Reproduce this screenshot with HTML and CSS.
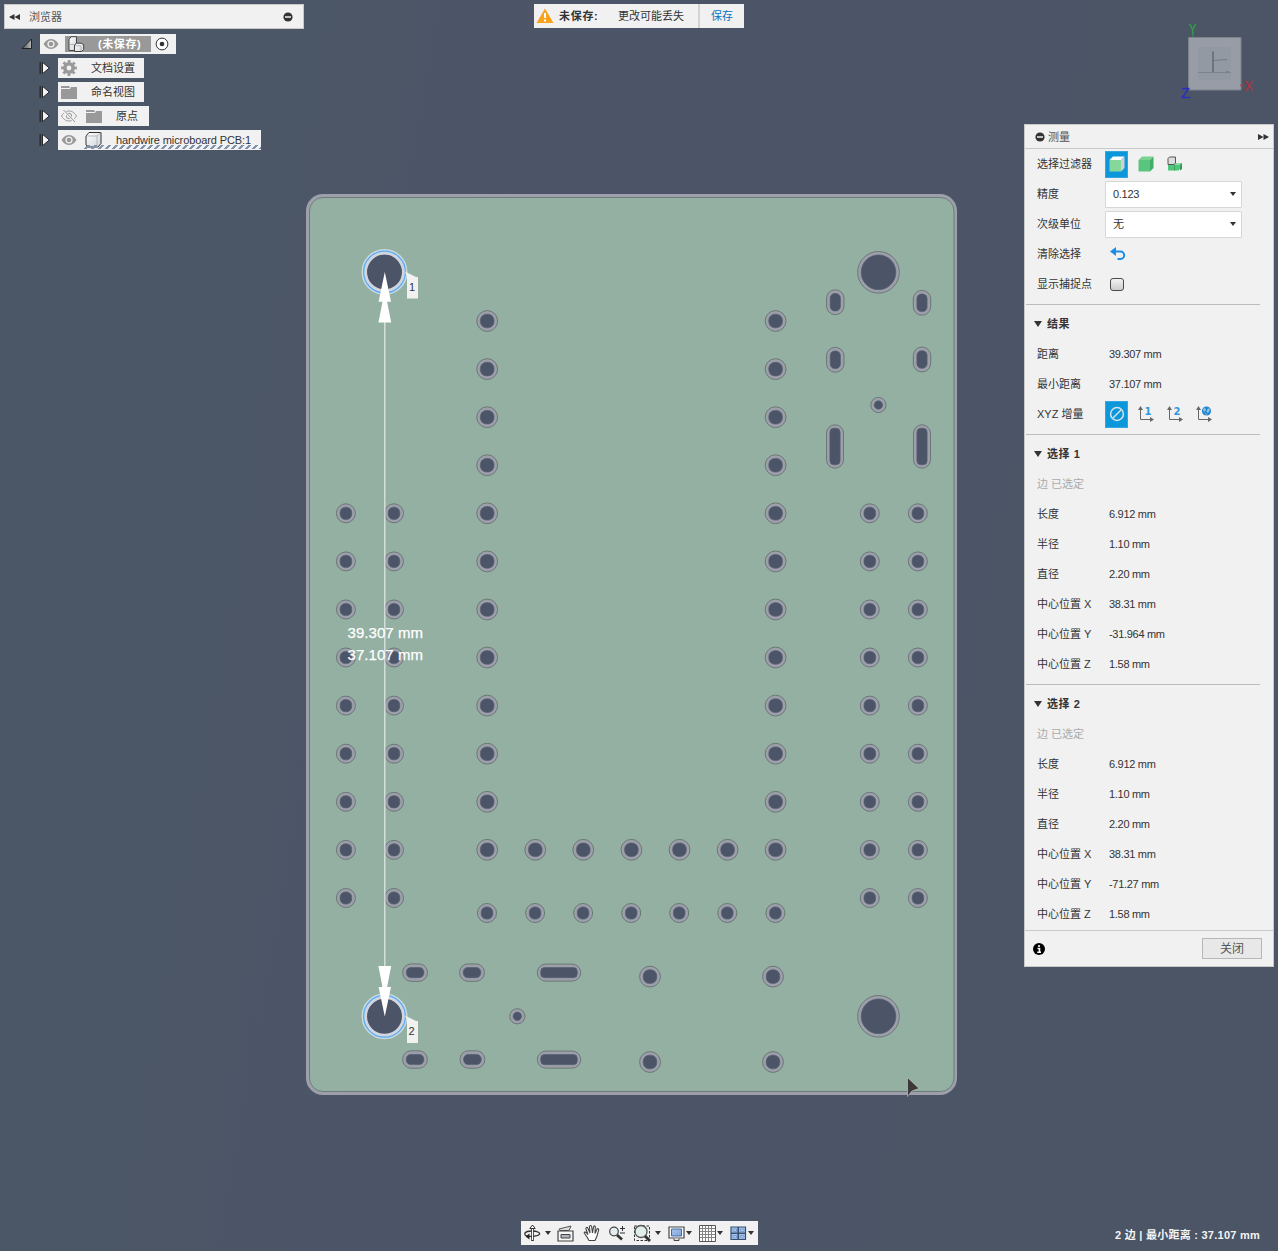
FILE: index.html
```html
<!DOCTYPE html>
<html lang="zh-CN">
<head>
<meta charset="utf-8">
<title>测量</title>
<link rel="stylesheet" href="styles.css">
</head>
<body>
<svg width="0" height="0" class="defs">
  <defs>
    <linearGradient id="glass" x1="0" y1="0" x2="1" y2="1"><stop offset="0" stop-color="#fff"/><stop offset="1" stop-color="#cfd3da"/></linearGradient>
    <linearGradient id="screen" x1="0" y1="0" x2="1" y2="1"><stop offset="0" stop-color="#a9c6ec"/><stop offset="1" stop-color="#7fa3d8"/></linearGradient>
    <linearGradient id="fold" x1="0" y1="0" x2="1" y2="0"><stop offset="0" stop-color="#555"/><stop offset="1" stop-color="#bbb"/></linearGradient>
    <symbol id="eye" viewBox="0 0 16 12"><path d="M.5 6C3 2 5.500 1 8 1s5 1 7.500 5C13 10 10.500 11 8 11S3 10 .5 6z" fill="#999"/><circle cx="8" cy="6" r="3.600" fill="#f0f0f0"/><circle cx="8" cy="6" r="2.300" fill="#999"/></symbol>
    <symbol id="eyeoff" viewBox="0 0 16 12"><path d="M.5 6C3 2 5.500 1 8 1s5 1 7.500 5C13 10 10.500 11 8 11S3 10 .5 6z" fill="none" stroke="#999"/><circle cx="8" cy="6" r="2.700" fill="none" stroke="#999"/><path d="M2 0l12 12" stroke="#f0f0f0" stroke-width="2.500"/><path d="M2.500 0l11.500 12" stroke="#999"/></symbol>
    <symbol id="folder" viewBox="0 0 16 13"><path d="M0 0h8l1 2H0zM0 3h9l1-2h6v12H0z" fill="#999"/></symbol>
    <symbol id="arrow" viewBox="0 0 12 14"><path d="M1.200 1v12" stroke="#242424" stroke-width="1.200"/><path d="M3.500 1.300v11.400L10.300 7z" fill="#f4f4f4" stroke="#242424" stroke-width="1"/></symbol>
    <symbol id="axes" viewBox="0 0 18 18"><path d="M3.500 2v12.500H15" fill="none" stroke="#666"/><path d="M1 5L3.500 1 6 5zM13 12l4 2.500-4 2.500z" fill="#666"/></symbol>
    <symbol id="caret" viewBox="0 0 6 4"><path d="M0 0h6L3 4z" fill="#333"/></symbol>
    <g id="pad"><circle r="10.400" class="ring"/><rect x="-6.800" y="-6.800" width="13.600" height="13.600" rx="6" class="hole"/></g>
    <g id="pin"><circle r="9.500" class="ring"/><rect x="-5.800" y="-6.100" width="11.600" height="12.200" rx="5.200" class="hole"/></g>
    <g id="via"><circle r="7.600" class="ring"/><circle r="4.200" class="hole"/></g>
    <g id="mount"><circle r="20.800" class="ring"/><circle r="17.400" class="hole"/></g>
    <g id="slot"><rect x="-8.700" y="-12.400" width="17.400" height="24.800" rx="8.500" class="ring"/><rect x="-5.100" y="-8.800" width="10.200" height="17.600" rx="4.600" class="hole"/></g>
    <g id="longslot"><rect x="-8.500" y="-21.700" width="17" height="43.400" rx="8.500" class="ring"/><rect x="-5.100" y="-18.300" width="10.200" height="36.600" rx="4" class="hole"/></g>
    <g id="pads4"><use href="#pad"/><use href="#pad" y="48.100"/><use href="#pad" y="96.200"/><use href="#pad" y="144.200"/></g>
    <g id="pads12"><use href="#pads4"/><use href="#pads4" y="192.300"/><use href="#pads4" y="384.600"/></g>
    <g id="pins3"><use href="#pin"/><use href="#pin" y="48.100"/><use href="#pin" y="96.200"/></g>
    <g id="pins9"><use href="#pins3"/><use href="#pins3" y="144.200"/><use href="#pins3" y="288.500"/></g>
    <g id="pick"><circle r="20.700" fill="none" stroke="#cbdadd" stroke-width="4.600"/><circle r="17.800" class="hole"/><circle r="18.500" fill="none" stroke="#d4d4df" stroke-width="2"/><circle r="20.900" fill="none" stroke="#57a9fa" stroke-width="1.200"/></g>
  </defs>
</svg>

<main class="app">
  <svg class="scene" width="1278" height="1251" viewBox="0 0 1278 1251">
    <rect x="307.500" y="195.500" width="648" height="898" rx="15.500" fill="#93b0a2" stroke="#9da0aa" stroke-width="3"/>
    <rect x="309.500" y="197.500" width="644.500" height="894" rx="13.500" fill="none" stroke="#717a7b"/>
    <use href="#mount" x="878.500" y="272.300"/><use href="#mount" x="878.500" y="1016.300"/>
    <use href="#pads12" x="487.200" y="321"/><use href="#pads12" x="775.600" y="321"/>
    <use href="#pad" x="535.300" y="849.800"/><use href="#pad" x="583.300" y="849.800"/><use href="#pad" x="631.400" y="849.800"/><use href="#pad" x="679.500" y="849.800"/><use href="#pad" x="727.600" y="849.800"/>
    <use href="#pin" x="487" y="913"/><use href="#pin" x="535.100" y="913"/><use href="#pin" x="583.100" y="913"/><use href="#pin" x="631.200" y="913"/><use href="#pin" x="679.200" y="913"/><use href="#pin" x="727.300" y="913"/><use href="#pin" x="775.400" y="913"/>
    <use href="#pins9" x="345.900" y="513.300"/><use href="#pins9" x="394" y="513.300"/><use href="#pins9" x="869.800" y="513.300"/><use href="#pins9" x="917.900" y="513.300"/>
    <use href="#pad" x="650" y="976.600"/><use href="#pad" x="773" y="976.600"/><use href="#pad" x="650" y="1062"/><use href="#pad" x="773" y="1062"/>
    <use href="#slot" x="835.300" y="302.200"/><use href="#slot" x="922" y="302.800"/><use href="#slot" x="835.300" y="359.800"/><use href="#slot" x="922" y="359.500"/>
    <use href="#longslot" x="835" y="446.500"/><use href="#longslot" x="922" y="446.500"/>
    <use href="#via" x="878.400" y="405"/><use href="#via" x="517.300" y="1016.300"/>
    <use href="#slot" transform="translate(415.100 972.600) rotate(90)"/><use href="#slot" transform="translate(472 972.600) rotate(90)"/><use href="#slot" transform="translate(415 1059.500) rotate(90)"/><use href="#slot" transform="translate(472.400 1059.500) rotate(90)"/>
    <use href="#longslot" transform="translate(559 972.600) rotate(90)"/><use href="#longslot" transform="translate(559 1059.600) rotate(90)"/>
    <use href="#pick" x="384.500" y="272"/><use href="#pick" x="384.500" y="1016.300"/>
    <path d="M384.800 322v645" stroke="#dde7e2" stroke-width="1.300"/>
    <path d="M384.800 272l6.200 29.800h-12.400zM384.800 290l6.400 32.500h-12.800zM384.800 1016.500l6.200-29.500h-12.400zM384.800 999l6.400-33h-12.800z" fill="#fff"/>
    <g class="tag"><path d="M405 271.500l11 5.500h2v21.500h-11V276zM405 1015.500l11 5.500h2v22h-11v-23z" fill="#f1f1f1"/><text x="409" y="291">1</text><text x="408.500" y="1035">2</text></g>
    <g class="dimension"><text x="347.500" y="638" textLength="75.500">39.307 mm</text><text x="347.500" y="660" textLength="75.500">37.107 mm</text></g>
    <g class="cube"><path d="M1188.500 37.500h52.500v52.500h-52.500z" fill="#989ca7" stroke="#7d8488"/><path d="M1198 47h33v33h-33z" fill="#9299a3"/><path d="M1198 72.500h33" stroke="#7c858f"/><path d="M1213 51.500v20.500" stroke="#6b747f" stroke-width="2"/><path d="M1214 60.500l13-1M1226 71.800h3" stroke="#707983"/><path d="M1193 32v5" stroke="#29a043"/><path d="M1240 85l4 1" stroke="#c22d37"/><text x="1189" y="34" fill="#2ba044" stroke="#2ba044" textLength="7.500" lengthAdjust="spacingAndGlyphs">Y</text><text x="1244.500" y="91" fill="#ae343f" stroke="#ae343f" textLength="8.500" lengthAdjust="spacingAndGlyphs">X</text><text x="1181" y="97.500" fill="#2930bd" stroke="#2930bd" textLength="9" lengthAdjust="spacingAndGlyphs">Z</text></g>
    <path d="M907.500 1077.500v19l4.500-5.500 7-2.500z" fill="#3d383a" stroke="#c7cbc8" stroke-width=".6"/>
  </svg>

  <section class="browser">
    <header class="browser-head"><svg width="11" height="8" viewBox="0 0 11 8"><path d="M5.500 1v6L0 4zM11 1v6L5.500 4z" fill="#333"/></svg><span>浏览器</span><svg class="collapse" width="10" height="10"><circle cx="5" cy="5" r="4.600" fill="#333"/><path d="M2 5h6" stroke="#fff" stroke-width="1.400"/></svg></header>
    <div class="node root"><svg width="12" height="12"><path d="M1 10.500L10.500 1v9.500z" fill="url(#fold)" stroke="#222"/></svg><div class="chip"><svg width="16" height="12"><use href="#eye"/></svg><div class="active-name"><svg width="17" height="16" viewBox="0 0 17 16"><path d="M1 3.500L3 .7h5.500v6.500L6.500 9v5.500H1z" fill="url(#glass)" stroke="#444"/><path d="M6.500 9l2-1.800h4.700l2.500 1.500v4.800l-2.200 2H6.500z" fill="url(#glass)" stroke="#444"/><path d="M1.500 8.500h5M7 9.800h6M13 10v5" fill="none" stroke="#a5a9b0" stroke-width=".8"/></svg><b>(未保存)</b></div><svg width="14" height="14"><circle cx="7" cy="7" r="5.900" fill="#fff" stroke="#333"/><circle cx="7" cy="7" r="2.300" fill="#333"/></svg></div></div>
    <div class="node"><svg width="12" height="14"><use href="#arrow"/></svg><div class="chip"><svg width="16" height="16"><circle cx="8" cy="8" r="4.200" fill="none" stroke="#999" stroke-width="3.600"/><circle cx="8" cy="8" r="6.600" fill="none" stroke="#999" stroke-width="2.600" stroke-dasharray="2.700 2.480" transform="rotate(-12 8 8)"/></svg><span>文档设置</span></div></div>
    <div class="node"><svg width="12" height="14"><use href="#arrow"/></svg><div class="chip"><svg width="16" height="13"><use href="#folder"/></svg><span>命名视图</span></div></div>
    <div class="node"><svg width="12" height="14"><use href="#arrow"/></svg><div class="chip wide"><svg width="16" height="12"><use href="#eyeoff"/></svg><svg width="16" height="13"><use href="#folder"/></svg><span>原点</span></div></div>
    <div class="node"><svg width="12" height="14"><use href="#arrow"/></svg><div class="chip wide linked"><svg width="16" height="12"><use href="#eye"/></svg><svg width="17" height="16" viewBox="0 0 17 16"><path d="M1 4l3-3.500h12v11L13 15H3l-2-2z" fill="url(#glass)" stroke="#333"/><path d="M1.500 4H12v11M12 4l3.500-3" fill="none" stroke="#b5b9bf"/></svg><span class="part">handwire microboard PCB:1</span></div></div>
  </section>

  <aside class="notice"><svg width="18" height="16" viewBox="0 0 18 16"><path d="M9 .5L17.500 15H.5z" fill="#faa21b"/><path d="M9 5v5M9 11.500v2" stroke="#fff" stroke-width="2"/></svg><b>未保存:</b><span>更改可能丢失</span><a>保存</a></aside>

  <section class="measure">
    <header class="measure-head"><svg width="10" height="10"><circle cx="5" cy="5" r="4.600" fill="#333"/><path d="M2 5h6" stroke="#fff" stroke-width="1.400"/></svg><span>测量</span><svg class="expand" width="11" height="8" viewBox="0 0 11 8"><path d="M0 1l5.500 3L0 7zM5.500 1L11 4 5.500 7z" fill="#333"/></svg></header>
    <div class="group">
      <div class="row"><label>选择过滤器</label><div class="tools"><i class="tool on"><svg width="16" height="16" viewBox="0 0 16 16"><path d="M.5 4L4 .5h11.500L12 4z" fill="#fff"/><path d="M12 4L15.500.5V12L12 15.500z" fill="#ced1d5"/><path d="M.5 4H12v11.500H.5z" fill="#86d79c"/></svg></i><i class="tool"><svg width="16" height="16" viewBox="0 0 16 16"><path d="M.5 4L4 .5h11.500L12 4z" fill="#79d28f"/><path d="M12 4L15.500.5V12L12 15.500z" fill="#3fae68"/><path d="M.5 4H12v11.500H.5z" fill="#59c57d"/></svg></i><i class="tool"><svg width="16" height="16" viewBox="0 0 16 16"><path d="M1 8.500h12V13l-1.500 1.500H1z" fill="#51c57a"/><path d="M7.500 8.500L9 7h6l-2 1.500z" fill="#84d99b"/><path d="M13 8.500L15 7v6l-2 1.500z" fill="#309d59"/><path d="M7.500 8.500v6" stroke="#36a45f"/><path d="M1 2.500L2.500 1h6v6L7 8.500H1z" fill="#ddd" stroke="#555"/></svg></i></div></div>
      <div class="row"><label>精度</label><div class="select"><span>0.123</span><svg width="6" height="4"><use href="#caret"/></svg></div></div>
      <div class="row"><label>次级单位</label><div class="select"><span>无</span><svg width="6" height="4"><use href="#caret"/></svg></div></div>
      <div class="row"><label>清除选择</label><svg class="undo" width="16" height="14" viewBox="0 0 16 14"><path d="M0 4.500L6 0v9z" fill="#1b8de8"/><path d="M5 4.500h5.500a3.700 3.700 0 0 1 0 7.400H7.500" fill="none" stroke="#1b8de8" stroke-width="2"/></svg></div>
      <div class="row"><label>显示捕捉点</label><i class="check"></i></div>
    </div>
    <div class="group">
      <h2>结果</h2>
      <div class="row"><label>距离</label><span>39.307 mm</span></div>
      <div class="row"><label>最小距离</label><span>37.107 mm</span></div>
      <div class="row"><label>XYZ 增量</label><div class="tools"><i class="tool on"><svg width="16" height="16"><circle cx="8" cy="8" r="6.400" fill="none" stroke="#d6e4eb" stroke-width="1.500"/><path d="M4 12l8-8" stroke="#d6e4eb" stroke-width="1.500"/></svg></i><i class="tool"><svg width="18" height="18"><use href="#axes"/><text x="7.500" y="10">1</text></svg></i><i class="tool"><svg width="18" height="18"><use href="#axes"/><text x="7.500" y="10">2</text></svg></i><i class="tool"><svg width="18" height="18"><use href="#axes"/><circle cx="11.500" cy="6" r="4.600" fill="#2688d1"/><path d="M8 4l2-1 1 2-2 2zM12 5l2-2 1 2-2 3-1.500-1zM10 8l2 1-1 1z" fill="#91c4e7"/></svg></i></div></div>
    </div>
    <div class="group">
      <h2>选择 1</h2>
      <div class="row muted"><label>边 已选定</label></div>
      <div class="row"><label>长度</label><span>6.912 mm</span></div>
      <div class="row"><label>半径</label><span>1.10 mm</span></div>
      <div class="row"><label>直径</label><span>2.20 mm</span></div>
      <div class="row"><label>中心位置 X</label><span>38.31 mm</span></div>
      <div class="row"><label>中心位置 Y</label><span>-31.964 mm</span></div>
      <div class="row"><label>中心位置 Z</label><span>1.58 mm</span></div>
    </div>
    <div class="group">
      <h2>选择 2</h2>
      <div class="row muted"><label>边 已选定</label></div>
      <div class="row"><label>长度</label><span>6.912 mm</span></div>
      <div class="row"><label>半径</label><span>1.10 mm</span></div>
      <div class="row"><label>直径</label><span>2.20 mm</span></div>
      <div class="row"><label>中心位置 X</label><span>38.31 mm</span></div>
      <div class="row"><label>中心位置 Y</label><span>-71.27 mm</span></div>
      <div class="row"><label>中心位置 Z</label><span>1.58 mm</span></div>
    </div>
    <footer><svg width="12" height="12"><circle cx="6" cy="6" r="6" fill="#000"/><path d="M6 2v2M4.500 5.500h2V9M4.300 9.300h3.700" fill="none" stroke="#fff" stroke-width="1.600"/></svg><button>关闭</button></footer>
  </section>

  <nav class="navbar">
    <svg width="18" height="18" viewBox="0 0 18 18"><path d="M5 12.500C-1 10.500 2 7 8.500 7s9.500 2 7.500 3.700-6 1.800-12 1.600" fill="none" stroke="#333" stroke-width="1.300"/><path d="M9.500 4v13" stroke="#333" stroke-width="2.600"/><path d="M9.500 4v12" stroke="#fff"/><path d="M6.800 4.500L9.500 1l2.700 3.500z" fill="#fff" stroke="#333"/><path d="M2.500 12.500l4-3v6z" fill="#222"/></svg>
    <svg class="drop" width="6" height="4"><use href="#caret"/></svg>
    <svg class="gap-a" width="17" height="17" viewBox="0 0 17 17"><path d="M3 5.500l-1-1.500 12-3-2 4.500z" fill="#ddd" stroke="#555"/><path d="M1 6h15v10H1z" fill="#f5f5f5" stroke="#444" stroke-width="1.200"/><path d="M4 9.500h9v3.500H4z" fill="#aeb3ba" stroke="#444"/></svg>
    <svg class="gap-b" width="18" height="18" viewBox="0 0 18 18"><path d="M6 16.500L4 13 1.500 9.500C.5 8 2.500 7.500 3.500 9L5 10.500 3 5c-.5-2 1.500-2 2-.5L7 9 6.500 3c0-2 2-2 2.200 0L9.500 9l1-6c.3-1.700 2-1.300 1.800.3L12 9.500l1.800-4c.7-1.500 2.200-.8 1.800.6L14 12l-2 4.500z" fill="#fff" stroke="#444" stroke-width="1.100"/></svg>
    <svg class="gap-c" width="18" height="18" viewBox="0 0 18 18"><circle cx="6" cy="7.500" r="4.300" fill="#e3ecef" stroke="#444" stroke-width="1.200"/><path d="M9 11l5 4.500" stroke="#333" stroke-width="2.800"/><path d="M12 4.500h5M14.500 2v5M12 9h5" stroke="#333"/></svg>
    <svg class="gap-c" width="18" height="18" viewBox="0 0 18 18"><path d="M1.500 2h15v14.500h-15z" fill="none" stroke="#333" stroke-dasharray="2.500 1.500"/><circle cx="8" cy="7.500" r="6" fill="#e2eeeb" stroke="#555" stroke-width="1.300"/><path d="M12 12l5 5" stroke="#333" stroke-width="3"/></svg>
    <svg class="drop" width="6" height="4"><use href="#caret"/></svg>
    <svg class="gap-c" width="17" height="17" viewBox="0 0 17 17"><path d="M1 2h15v11H1z" fill="#fff" stroke="#444" stroke-width="1.200"/><path d="M3.500 4h10v7h-10z" fill="url(#screen)" stroke="#456ba3"/><path d="M6 13.500v2h5v-2" fill="#ddd" stroke="#444"/></svg>
    <svg class="drop tight" width="6" height="4"><use href="#caret"/></svg>
    <svg class="gap-c" width="17" height="17" viewBox="0 0 17 17"><path d="M.5.5h16v16H.5z" fill="#fff" stroke="#555"/><path d="M3.500 1v15M6.500 1v15M9.500 1v15M12.500 1v15M1 3.500h15M1 6.500h15M1 9.500h15M1 12.500h15" stroke="#848484"/></svg>
    <svg class="drop tight" width="6" height="4"><use href="#caret"/></svg>
    <svg class="gap-c" width="17" height="17" viewBox="0 0 17 17"><path d="M1 2h7v6H1zM8.500 2h7v6h-7zM1 8.500h7v6H1zM8.500 8.500h7v6h-7z" fill="#a9c6ed" stroke="#38506f" stroke-width="1.200"/><path d="M3 4h3.500v2.500H3zM10.500 4H14v2.500h-3.500zM3 10.500h3.500V13H3zM10.500 10.500H14V13h-3.500z" fill="none" stroke="#7196c9" stroke-width=".8"/></svg>
    <svg class="drop tight" width="6" height="4"><use href="#caret"/></svg>
  </nav>
  <div class="status">2 边 | 最小距离 : 37.107 mm</div>
</main>
</body>
</html>
```
FILE: styles.css
```css
* { box-sizing: border-box; }
body {
  margin: 0;
  font: 11px/16px "Liberation Sans", "Noto Sans CJK SC", sans-serif;
  color: #333;
}
.defs { position: absolute; }
svg { display: block; flex: none; }
i { font-style: normal; }

.app {
  position: relative;
  width: 1278px;
  height: 1251px;
  overflow: hidden;
  background: linear-gradient(100deg, #4b5767, #4c5567 45%, #4b5566);
}
.scene { position: absolute; inset: 0; }
.ring { fill: #9da0ab; stroke: #66706f; stroke-width: 0.9; }
.hole { fill: #4b5567; stroke: #566071; stroke-width: 0.7; }
.tag text { font-size: 11px; fill: #333; }
.dimension text { font-size: 15px; fill: #fff; stroke: #fff; stroke-width: 0.25; }
.cube text { font-size: 15px; stroke-width: 0.4; }

/* Browser tree */
.browser { position: absolute; left: 4px; top: 4px; width: 300px; }
.browser-head {
  display: flex;
  align-items: center;
  height: 25px;
  margin-bottom: 3px;
  padding: 0 10px 0 4px;
  background: #f1f1f1;
  border: 1px solid #c9c9c9;
  color: #555;
}
.browser-head span { margin-left: 9px; }
.browser-head .collapse { margin-left: auto; }
.node { display: flex; align-items: center; height: 24px; padding-left: 35px; }
.node.root { padding-left: 17px; }
.chip {
  display: flex;
  align-items: center;
  height: 20px;
  margin-left: 7px;
  padding: 0 9px 0 3px;
  background: #f1f1f1;
}
.chip span { margin-left: 14px; }
.chip.wide { padding-right: 11px; }
.chip.wide svg + svg { margin-left: 9px; }
.chip.linked { position: relative; padding-right: 10px; }
.chip.linked svg + svg { margin-left: 8px; }
.chip.linked::after {
  content: "";
  position: absolute;
  left: 25px;
  right: 0;
  bottom: 1px;
  height: 4px;
  background: repeating-linear-gradient(135deg, transparent 0 3.3px, #8090ae 3.3px 4.95px);
}
.part { letter-spacing: -0.1px; white-space: nowrap; }
.root .chip { padding-right: 7px; }
.active-name {
  display: flex;
  align-items: center;
  width: 86px;
  height: 16px;
  margin: 0 4px 0 6px;
  padding-left: 3px;
  background: #999;
  color: #fff;
}
.active-name b { margin-left: 13px; letter-spacing: 0.6px; }

/* Unsaved notice */
.notice {
  position: absolute;
  left: 534px;
  top: 4px;
  display: flex;
  align-items: center;
  width: 210px;
  height: 24px;
  padding-left: 2px;
  background: #f1f1f1;
}
.notice b { width: 59px; margin-left: 5px; letter-spacing: 0.7px; }
.notice a {
  height: 24px;
  margin-left: 14px;
  padding-left: 11px;
  border-left: 2px solid #d3d3d3;
  line-height: 24px;
  color: #0a74bd;
}

/* Measure panel */
.measure {
  position: absolute;
  left: 1024px;
  top: 124px;
  width: 250px;
  height: 843px;
  background: #f1f1f1;
  border: 1px solid #c9c9c9;
}
.measure-head {
  display: flex;
  align-items: center;
  height: 24px;
  padding: 0 4px 0 10px;
  border-bottom: 1px solid #c9c9c9;
  color: #555;
}
.measure-head span { margin-left: 3px; }
.measure-head .expand { margin-left: auto; }
.group { display: flow-root; margin: 0 13px 0 1px; border-bottom: 1px solid #bcbcbc; }
.group:nth-of-type(1) { height: 156px; }
.group:nth-of-type(2) { height: 130px; }
.group:nth-of-type(3) { height: 250px; }
.group:nth-of-type(4) { height: 245px; border: 0; }
.row { display: flex; align-items: center; height: 30px; padding-left: 11px; }
.row label { width: 72px; }
.row span { letter-spacing: -0.3px; }
.row.muted { color: #aaa; }
h2 {
  display: flex;
  align-items: center;
  gap: 5px;
  height: 30px;
  margin: 4px 0 0;
  padding-left: 8px;
  font-size: 11px;
  letter-spacing: 0.6px;
}
h2::before { content: ""; border: 4.5px solid transparent; border-top: 6px solid #333; border-bottom: 0; }
.tools { display: flex; gap: 6px; margin-left: -4px; }
.tool { display: grid; place-items: center; width: 23px; height: 27px; }
.tool.on { background: #0c97da; border: 1px solid #35a6e2; }
.tool text { font: bold 10px "DejaVu Sans", sans-serif; fill: #2e97df; }
.select {
  display: flex;
  align-items: center;
  justify-content: space-between;
  width: 137px;
  height: 27px;
  margin-left: -4px;
  padding: 0 5px 0 7px;
  background: #fff;
  border: 1px solid #d7d7d7;
  border-radius: 1px;
}
.undo { margin-left: 1px; }
.check {
  width: 14px;
  height: 13px;
  margin-left: 1px;
  border: 1px solid #4a4a4a;
  border-radius: 3px;
  background: linear-gradient(#f3f3f3, #ccc);
}
footer {
  display: flex;
  align-items: center;
  justify-content: space-between;
  height: 36px;
  padding: 0 11px 0 8px;
  border-top: 1px solid #c9c9c9;
}
footer button {
  width: 60px;
  height: 21px;
  padding: 0;
  font: 12px/18px "Liberation Sans", "Noto Sans CJK SC", sans-serif;
  color: #555;
  background: #e8e8e8;
  border: 1px solid #b7b7b7;
}

/* Navigation bar and status */
.navbar {
  position: absolute;
  left: 521px;
  top: 1221px;
  display: flex;
  align-items: center;
  width: 237px;
  height: 24px;
  padding-left: 2px;
  background: #f1f1f1;
}
.navbar .drop { margin-left: 4px; }
.navbar .drop.tight { margin-left: 1px; }
.gap-a { margin-left: 6px; }
.gap-b { margin-left: 9px; }
.gap-c { margin-left: 7px; }
.status {
  position: absolute;
  right: 18px;
  top: 1227px;
  color: #f4f4f4;
  font-weight: bold;
  letter-spacing: 0.25px;
  white-space: nowrap;
}
```
